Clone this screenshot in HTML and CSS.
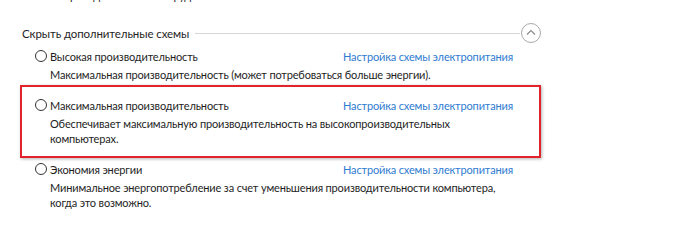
FILE: index.html
```html
<!DOCTYPE html>
<html lang="ru">
<head>
    <meta charset="UTF-8">
    <title>Электропитание</title>
    <link rel="stylesheet" href="styles.css">
</head>
<body>
    <div class="panel">
        <div class="cut-line">на приведение этого оборудования.</div>

        <div class="section-head">
            <span class="section-title">Скрыть дополнительные схемы</span>
            <span class="rule"></span>
            <span class="toggle">
                <svg width="20" height="20" viewBox="0 0 20 20">
                    <circle cx="10" cy="10" r="9.5" fill="none" stroke="#a8a8a8" stroke-width="1"/>
                    <path d="M6 11.5 L10 7.5 L14 11.5" fill="none" stroke="#8a8a8a" stroke-width="1.2"/>
                </svg>
            </span>
        </div>

        <div class="scheme">
            <div class="scheme-row">
                <label class="radio"><span class="dot"></span>Высокая производительность</label>
                <a class="link" href="#">Настройка схемы электропитания</a>
            </div>
            <div class="desc">Максимальная производительность (может потребоваться больше энергии).</div>
        </div>

        <div class="scheme marked">
            <div class="scheme-row">
                <label class="radio"><span class="dot"></span>Максимальная производительность</label>
                <a class="link" href="#">Настройка схемы электропитания</a>
            </div>
            <div class="desc">Обеспечивает максимальную производительность на высокопроизводительных<br>компьютерах.</div>
        </div>

        <div class="scheme">
            <div class="scheme-row">
                <label class="radio"><span class="dot"></span>Экономия энергии</label>
                <a class="link" href="#">Настройка схемы электропитания</a>
            </div>
            <div class="desc">Минимальное энергопотребление за счет уменьшения производительности компьютера,<br>когда это возможно.</div>
        </div>
    </div>
</body>
</html>
```

FILE: styles.css
```css
* {
    margin: 0;
    padding: 0;
    box-sizing: border-box;
}

body {
    font-family: Lato, "Noto Sans", sans-serif;
    font-size: 11px;
    letter-spacing: -0.15px;
    color: #1e1e1e;
    background: #fff;
    overflow: hidden;
}

.panel {
    width: 541px;
    padding-left: 20px;
}

.cut-line {
    margin-top: -12px;
    padding-left: 30px;
    line-height: 16px;
}

.section-head {
    display: flex;
    align-items: center;
    margin-top: 20px;
    padding-left: 2px;
    height: 20px;
}

.section-title {
    font-size: 11.5px;
    letter-spacing: -0.1px;
    line-height: 16px;
    padding-right: 6px;
}

.rule {
    flex: 1;
    height: 1px;
    background: #d6d6d6;
    margin-top: -2px;
}

.toggle {
    display: flex;
    margin-left: 1px;
    margin-top: -3px;
}

.scheme {
    padding: 0 28px 0 15px;
    margin-top: 4px;
}

.scheme.marked {
    border: 2px solid #e1232b;
    box-shadow: 1px 1px 3px rgba(0, 0, 0, 0.3);
    padding: 10px 26px 10px 13px;
    margin-top: 3px;
}

.scheme.marked + .scheme {
    margin-top: 3px;
}

.scheme-row {
    display: flex;
    justify-content: space-between;
    align-items: center;
    height: 16px;
}

.radio {
    display: flex;
    align-items: center;
}

.dot {
    width: 12px;
    height: 12px;
    border: 1px solid #333;
    border-radius: 50%;
    margin-right: 3px;
}

.link {
    color: #2f7bd0;
    text-decoration: none;
}

.desc {
    margin-top: 3px;
    padding-left: 15px;
    line-height: 15px;
    white-space: nowrap;
}
```
